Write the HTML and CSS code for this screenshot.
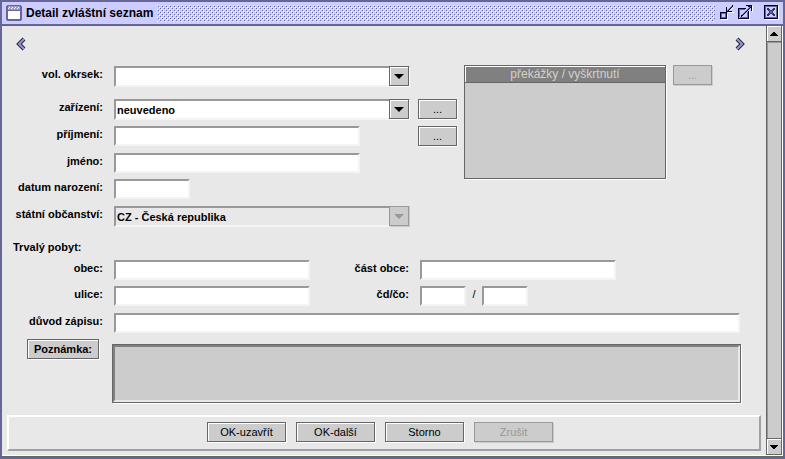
FILE: index.html
```html
<!DOCTYPE html>
<html lang="cs">
<head>
    <meta charset="UTF-8">
    <meta name="viewport" content="width=device-width, initial-scale=1.0">
    <title>Detail zvláštní seznam</title>
    <link rel="stylesheet" href="styles.css">
</head>
<body>
    <div class="window">
        <header class="titlebar">
            <svg class="window-icon" width="16" height="16" viewBox="0 0 16 16" shape-rendering="crispEdges" aria-hidden="true">
                <path d="M1 0h14v1h1v14h-1v1H1v-1H0V1h1z" fill="#666699"/>
                <path d="M2 1h12v4H2z" fill="#9999cc"/>
                <path d="M2 3h1v1H2zM3 2h1v1H3zM5 3h1v1H5zM6 2h1v1H6zM8 3h1v1H8zM9 2h1v1H9zM11 3h1v1h-1zM12 2h1v1h-1z" fill="#fff"/>
                <path d="M2 6h12v8H2z" fill="#fff"/>
            </svg>
            <h1 class="title">Detail zvláštní seznam</h1>
            <div class="bumps"></div>
            <div class="window-buttons">
                <button type="button" class="icon-btn" aria-label="Minimalizovat">
                    <svg width="15" height="16" viewBox="0 0 15 16" shape-rendering="crispEdges">
                        <path d="M2 9h7v6H2zM9 7h6v1H9zM12 4h1v1h-1zM13 3h1v1h-1z" fill="#fff"/>
                        <path d="M1 7h7v7H1z" fill="#000033"/>
                        <path d="M2 8h5v5H2z" fill="#666699"/>
                        <path d="M3 9h3v3H3z" fill="#ccccff"/>
                        <path d="M7 2h1v3h1V4h1V3h1V2h1V1h1V0h1v2h-1v1h-1v1h-1v1h-1v1h3v1H7z" fill="#000033"/>
                        <path d="M8 5h1v1H8zM9 4h1v1H9zM10 3h1v1h-1zM11 2h1v1h-1zM12 1h1v1h-1z" fill="#666699"/>
                    </svg>
                </button>
                <button type="button" class="icon-btn" aria-label="Maximalizovat">
                    <svg width="16" height="16" viewBox="0 0 16 16" shape-rendering="crispEdges">
                        <path d="M2 14h11v1H2zM12 6h1v9h-1zM15 1h1v6h-1z" fill="#fff"/>
                        <path d="M1 3h8v1H2v9h9V6h1v8H1z" fill="#000033"/>
                        <path d="M2 4h6v1H3v7H2zM10 7h1v6H3v-1h7z" fill="#666699"/>
                        <path d="M9 0h6v6h-1V3h-1v1h-1v1h-1v1h-1v1H9v1H8v1H7v1H6v1H5v1H4v-2h1V9h1V8h1V7h1V6h1V5h1V4h1V3h1V2h-1V1H9z" fill="#000033"/>
                        <path d="M13 1h1v1h-1zM12 2h1v1h-1zM11 3h1v1h-1zM10 4h1v1h-1zM9 5h1v1H9zM8 6h1v1H8zM7 7h1v1H7zM6 8h1v1H6zM5 9h1v1H5z" fill="#666699"/>
                    </svg>
                </button>
                <button type="button" class="icon-btn icon-close" aria-label="Zavřít">
                    <svg width="16" height="16" viewBox="0 0 16 16" shape-rendering="crispEdges">
                        <path d="M1 14h14v1H1zM14 1h1v14h-1z" fill="#fff"/>
                        <path d="M0 0h14v14H0z" fill="#000033"/>
                        <path d="M1 1h12v12H1z" fill="#666699"/>
                        <path d="M2 2h10v10H2z" fill="#ccccff"/>
                        <path d="M3 3h2v1h1v1h2V4h1V3h2v2h-1v1H9v2h1v1h1v2H9v-1H8V9H6v1H5v1H3V9h1V8h1V6H4V5H3z" fill="#333366"/>
                        <path d="M5 5h1v1H5zM8 5h1v1H8zM6 6h2v2H6zM5 8h1v1H5zM8 8h1v1H8z" fill="#666699"/>
                    </svg>
                </button>
            </div>
        </header>

        <div class="body">
            <form class="content">
                <nav class="pager">
                    <button type="button" class="icon-btn" aria-label="Předchozí">
                        <svg width="10" height="14" viewBox="0 0 10 14">
                            <path d="M8 2L3 7l5 5" fill="none" stroke="#222244" stroke-width="4"/>
                            <path d="M8 2L3 7l5 5" fill="none" stroke="#9999cc" stroke-width="2"/>
                        </svg>
                    </button>
                    <button type="button" class="icon-btn" aria-label="Další">
                        <svg width="10" height="14" viewBox="0 0 10 14">
                            <path d="M2 2l5 5-5 5" fill="none" stroke="#222244" stroke-width="4"/>
                            <path d="M2 2l5 5-5 5" fill="none" stroke="#9999cc" stroke-width="2"/>
                        </svg>
                    </button>
                </nav>

                <div class="top">
                    <div class="fields fields-main">
                        <div class="row row-first">
                            <label class="label" for="okrsek">vol. okrsek:</label>
                            <div class="combo">
                                <select id="okrsek" class="field"><option></option></select>
                                <span class="combo-arrow"></span>
                            </div>
                        </div>
                        <div class="row">
                            <label class="label" for="zarizeni">zařízení:</label>
                            <div class="combo">
                                <select id="zarizeni" class="field"><option>neuvedeno</option></select>
                                <span class="combo-arrow"></span>
                            </div>
                            <button type="button" class="btn btn-more">...</button>
                        </div>
                        <div class="row row-tall">
                            <label class="label" for="prijmeni">příjmení:</label>
                            <input type="text" id="prijmeni" class="field field-name">
                            <button type="button" class="btn btn-more">...</button>
                        </div>
                        <div class="row">
                            <label class="label" for="jmeno">jméno:</label>
                            <input type="text" id="jmeno" class="field field-name">
                        </div>
                        <div class="row row-tall">
                            <label class="label" for="narozeni">datum narození:</label>
                            <input type="text" id="narozeni" class="field field-date">
                        </div>
                        <div class="row">
                            <label class="label" for="obcanstvi">státní občanství:</label>
                            <div class="combo">
                                <select id="obcanstvi" class="field" disabled><option>CZ - Česká republika</option></select>
                                <span class="combo-arrow disabled"></span>
                            </div>
                        </div>
                    </div>
                    <table class="list">
                        <thead>
                            <tr><th>překážky / vyškrtnutí</th></tr>
                        </thead>
                        <tbody>
                            <tr><td></td></tr>
                        </tbody>
                    </table>
                    <button type="button" class="btn btn-more" disabled>...</button>
                </div>

                <h2 class="section-title">Trvalý pobyt:</h2>
                <div class="fields">
                    <div class="row">
                        <label class="label" for="obec">obec:</label>
                        <input type="text" id="obec" class="field field-place">
                        <label class="label" for="cast">část obce:</label>
                        <input type="text" id="cast" class="field field-place">
                    </div>
                    <div class="row row-tall">
                        <label class="label" for="ulice">ulice:</label>
                        <input type="text" id="ulice" class="field field-place">
                        <label class="label" for="cd">čd/čo:</label>
                        <div class="numbers">
                            <input type="text" id="cd" class="field field-number">
                            <span class="slash">/</span>
                            <input type="text" id="co" class="field field-number" aria-label="čo">
                        </div>
                    </div>
                    <div class="row">
                        <label class="label" for="duvod">důvod zápisu:</label>
                        <input type="text" id="duvod" class="field field-wide">
                    </div>
                    <div class="row note-row">
                        <div class="label">
                            <button type="button" class="btn btn-note">Poznámka:</button>
                        </div>
                        <textarea class="note" aria-label="Poznámka" readonly></textarea>
                    </div>
                </div>

                <footer class="actions">
                    <button type="submit" class="btn btn-action">OK-uzavřít</button>
                    <button type="button" class="btn btn-action">OK-další</button>
                    <button type="button" class="btn btn-action">Storno</button>
                    <button type="button" class="btn btn-action" disabled>Zrušit</button>
                </footer>
            </form>

            <div class="scrollbar">
                <button type="button" class="scroll-btn" aria-label="Nahoru">
                    <svg width="8" height="4" viewBox="0 0 8 4" shape-rendering="crispEdges"><path d="M3 0h2v1h1v1h1v1h1v1H0V3h1V2h1V1h1z"/></svg>
                </button>
                <div class="scroll-thumb"></div>
                <button type="button" class="scroll-btn" aria-label="Dolů">
                    <svg width="8" height="4" viewBox="0 0 8 4" shape-rendering="crispEdges"><path d="M0 0h8v1H7v1H6v1H5v1H3V3H2V2H1V1H0z"/></svg>
                </button>
            </div>
        </div>
    </div>
</body>
</html>
```
FILE: styles.css
```css
* {
    margin: 0;
    padding: 0;
    box-sizing: border-box;
}

body {
    font-family: "Liberation Sans", Arial, sans-serif;
    font-size: 11px;
    color: #000;
    background: #e8e8e8;
}

button,
input,
select,
textarea {
    font: inherit;
    color: inherit;
    border-radius: 0;
}

.window {
    display: flex;
    flex-direction: column;
    min-height: 100vh;
    border: 2px solid #666699;
    background: #e8e8e8;
}

/* Title bar */
.titlebar {
    display: flex;
    align-items: center;
    gap: 4px;
    height: 23px;
    padding: 0 3px 0 4px;
    background: #ccccff;
    border-bottom: 1px solid #666699;
}

.title {
    font-size: 12px;
    line-height: 16px;
    font-weight: bold;
    white-space: nowrap;
}

/* dotted grip, 4px tile */
.bumps {
    flex: 1;
    height: 17px;
    background:
        conic-gradient(at 1px 1px, transparent 75%, #fff 0) 0 0 / 4px 4px,
        conic-gradient(at 1px 1px, transparent 75%, #fff 0) 2px 2px / 4px 4px,
        conic-gradient(at 1px 1px, transparent 75%, #666699 0) 1px 1px / 4px 4px,
        conic-gradient(at 1px 1px, transparent 75%, #666699 0) 3px 3px / 4px 4px;
}

.window-buttons {
    display: flex;
    gap: 3px;
}

.icon-btn {
    display: block;
    border: none;
    background: none;
}

.icon-btn svg {
    display: block;
}

.icon-close {
    margin-left: 8px;
}

/* Body */
.body {
    flex: 1;
    display: flex;
    border: 1px solid #666;
    border-width: 1px 0;
    box-shadow: inset 0 -1px #fff;
}

.content {
    flex: 1;
    display: flex;
    flex-direction: column;
    min-width: 0;
    padding: 11px 5px 5px;
}

.pager {
    display: flex;
    justify-content: space-between;
    padding: 0 16px 0 9px;
}

.top {
    display: flex;
    align-items: flex-start;
    gap: 7px;
    margin-top: 14px;
}

.fields {
    display: flex;
    flex-direction: column;
    gap: 6px;
}

.fields-main {
    padding-top: 1px;
}

.row {
    display: flex;
    align-items: flex-start;
}

.row-tall {
    min-height: 21px;
}

.row-first {
    margin-bottom: 6px;
}

.label {
    flex: none;
    width: 96px;
    margin-right: 11px;
    line-height: 16px;
    font-weight: bold;
    text-align: right;
    white-space: nowrap;
}

.field + .label {
    width: 99px;
}

.field {
    height: 20px;
    padding: 0 1px;
    background: #fff;
    border: 2px solid;
    border-color: #999 #f4f4f4 #f4f4f4 #999;
    outline: none;
}

.field-name {
    width: 246px;
    margin-right: 58px;
}

.field-date {
    width: 76px;
}

.field-place {
    width: 196px;
}

.field-number {
    width: 46px;
}

.field-wide {
    flex: 1;
    margin-right: 21px;
}

.numbers {
    display: flex;
}

.slash {
    width: 16px;
    line-height: 16px;
    text-align: center;
}

/* Combo box */
.combo {
    position: relative;
    width: 296px;
    margin-right: 8px;
}

.combo .field {
    display: block;
    width: 100%;
    height: 21px;
    padding-right: 20px;
    appearance: none;
    font-weight: bold;
    opacity: 1;
}

.combo .field:disabled {
    color: #000;
    background: #e8e8e8;
}

.combo-arrow {
    position: absolute;
    top: 0;
    right: 1px;
    width: 20px;
    height: 20px;
    background: #ccc;
    border: 1px solid #666;
    box-shadow: inset 1px 1px #fff, 1px 1px #fff;
    pointer-events: none;
}

.combo-arrow::after {
    content: "";
    display: block;
    width: 0;
    margin: 7px auto 0;
    border: 5px solid transparent;
    border-top-color: #000;
    border-bottom: none;
}

.combo-arrow.disabled {
    border-color: #999;
    box-shadow: 1px 1px #ccc;
}

.combo-arrow.disabled::after {
    border-top-color: #999;
}

/* Buttons */
.btn {
    height: 20px;
    line-height: 16px;
    background: #ccc;
    border: 1px solid #666;
    box-shadow: inset 1px 1px #fff, 1px 1px #fff;
    text-align: center;
}

.btn:disabled {
    color: #999;
    border-color: #999;
    box-shadow: 1px 1px #ccc;
}

.btn-more {
    flex: none;
    width: 39px;
}

.btn-note {
    width: 72px;
    margin-right: 4px;
    font-weight: bold;
}

.btn-action {
    width: 79px;
}

/* List */
.list {
    flex: 0 1 202px;
    width: 202px;
    height: 114px;
    border-spacing: 0;
    background: #ccc;
    border: 1px solid #666;
    box-shadow: 1px 1px #fff;
}

.list th {
    height: 16px;
    padding-top: 1px;
    line-height: 15px;
    font-size: 12px;
    font-weight: normal;
    color: #d4d0c8;
    background: #808080;
    border-bottom: 1px solid #666;
    box-shadow: inset 1px 1px #fff;
}

.section-title {
    margin: 6px 0;
    padding: 7px 0 0 6px;
    font-size: 11px;
    line-height: 14px;
}

.note-row {
    align-items: stretch;
}

.note {
    flex: 1;
    display: block;
    height: 59px;
    margin: 5px 20px 0 -2px;
    resize: none;
    background: #ccc;
    border: 3px solid;
    border-color: #808080 #e8e8e8 #e8e8e8 #808080;
    outline: 1px solid #666;
    outline-offset: -1px;
    box-shadow: 1px 1px #fff;
}

.actions {
    display: flex;
    justify-content: center;
    gap: 10px;
    margin-top: auto;
    padding: 5px 8px 7px 0;
    border: 2px solid;
    border-color: #fff #a0a0a0 #a0a0a0 #fff;
}

/* Scrollbar */
.scrollbar {
    display: flex;
    flex-direction: column;
    width: 16px;
    margin: 0 1px 1px 0;
    background: #ccc;
    border: 1px solid #666;
    border-width: 0 1px;
    box-shadow: 1px 0 #fff;
}

.scroll-btn {
    display: flex;
    align-items: center;
    justify-content: center;
    height: 16px;
    background: #ccc;
    border: none;
    border-bottom: 1px solid #666;
    box-shadow: inset 1px 1px #fff;
}

.scroll-thumb {
    flex: 1;
    border-bottom: 1px solid #666;
    box-shadow: inset 1px 1px #999;
}
```
